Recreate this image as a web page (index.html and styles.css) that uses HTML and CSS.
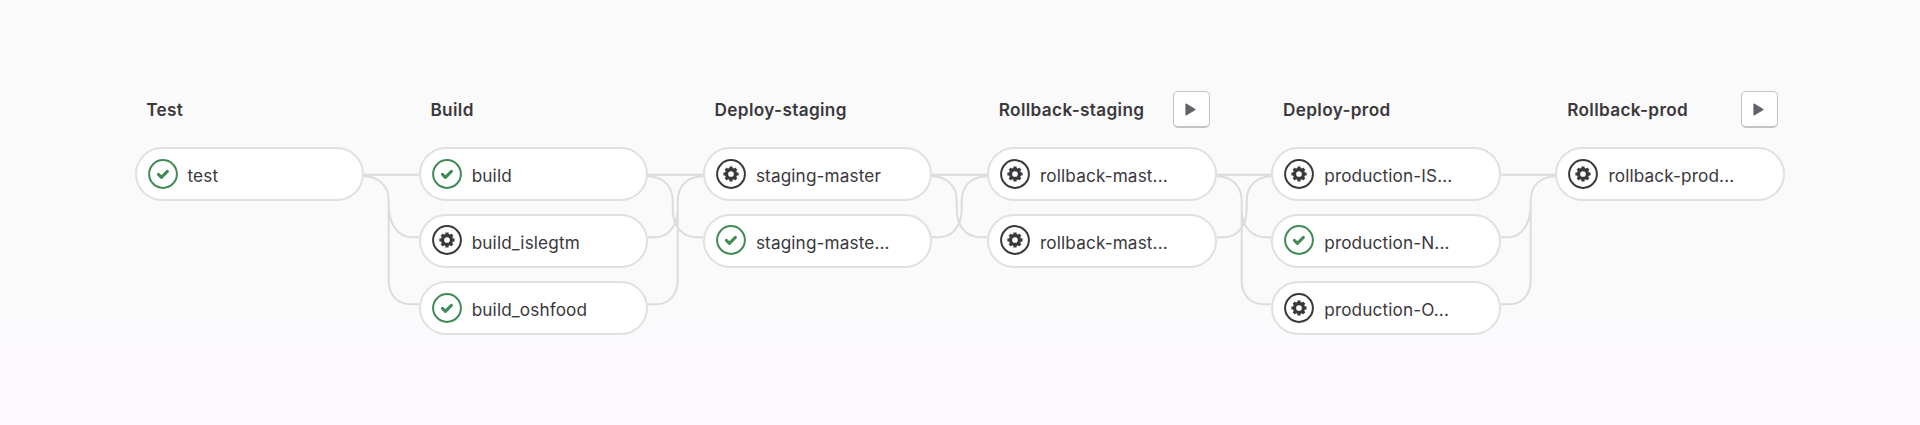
FILE: index.html
```
<!DOCTYPE html>
<html lang="en">
<head>
<meta charset="utf-8">
<title>Pipeline</title>
<link rel="stylesheet" href="styles.css">
</head>
<body>
<svg class="defs" width="0" height="0" aria-hidden="true">
  <symbol id="passed" viewBox="0 0 30 30">
    <circle cx="15" cy="15" r="13.9" fill="none" stroke="#3f8a55" stroke-width="2"/>
    <path d="M10.4 15.4l3 3 6-6" fill="none" stroke="#3f8a55" stroke-width="3" stroke-linecap="round" stroke-linejoin="round"/>
  </symbol>
  <symbol id="manual" viewBox="0 0 30 30">
    <circle cx="15" cy="15" r="13.9" fill="none" stroke="#3a383c" stroke-width="2"/>
    <circle cx="15" cy="15" r="4.5" fill="none" stroke="#3a383c" stroke-width="3.3"/>
    <path d="M15 7.4v3M15 19.6v3M7.4 15h3M19.6 15h3M9.7 9.7l2 2M18.3 18.3l2 2M9.7 20.3l2-2M18.3 11.7l2-2" stroke="#3a383c" stroke-width="3.2"/>
  </symbol>
  <symbol id="play" viewBox="0 0 11 13">
    <path d="M1 1.1v10.8L10 6.5z" fill="#626168" stroke="#626168" stroke-width="1.2" stroke-linejoin="round"/>
  </symbol>
</svg>
<main class="pipeline">
  <section class="stage">
    <header class="stage-head"><h2 class="stage-title">Test</h2></header>
    <div class="job"><svg class="status"><use href="#passed"/></svg><span class="job-name">test</span></div>
  </section>
  <svg class="links" viewBox="0 0 54.7 190">
    <path d="M-1 27.7H56M-1 29.2C14 29.2 24.7 38 24.7 54V133C24.7 149 34 157.2 47 157.2H56M24.7 58C24.7 77 34 90.2 48 90.2H56"/>
  </svg>
  <section class="stage">
    <header class="stage-head"><h2 class="stage-title">Build</h2></header>
    <div class="job"><svg class="status"><use href="#passed"/></svg><span class="job-name">build</span></div>
    <div class="job"><svg class="status raised"><use href="#manual"/></svg><span class="job-name">build_islegtm</span></div>
    <div class="job"><svg class="status"><use href="#passed"/></svg><span class="job-name">build_oshfood</span></div>
  </section>
  <svg class="links" viewBox="0 0 54.7 190">
    <path d="M-1 27.7H56M-1 29.2C14 29.2 24.7 38 24.7 54V62C24.7 79 34 90.2 48 90.2H56M56 29.2C40 29.2 29.7 38 29.7 54V133C29.7 149 20 157.2 8 157.2H-1M29.7 62C29.7 79 20 90.2 8 90.2H-1"/>
  </svg>
  <section class="stage">
    <header class="stage-head"><h2 class="stage-title">Deploy-staging</h2></header>
    <div class="job"><svg class="status"><use href="#manual"/></svg><span class="job-name">staging-master</span></div>
    <div class="job"><svg class="status raised"><use href="#passed"/></svg><span class="job-name">staging-maste...</span></div>
  </section>
  <svg class="links" viewBox="0 0 54.7 190">
    <path d="M-1 27.7H56M-1 29.2C14 29.2 24.7 38 24.7 54V62C24.7 79 34 90.2 48 90.2H56M56 29.2C40 29.2 29.7 38 29.7 54V62C29.7 79 20 90.2 8 90.2H-1"/>
  </svg>
  <section class="stage">
    <header class="stage-head"><h2 class="stage-title">Rollback-staging</h2><button class="play-all" aria-label="Play all manual"><svg class="play"><use href="#play"/></svg></button></header>
    <div class="job"><svg class="status"><use href="#manual"/></svg><span class="job-name">rollback-mast...</span></div>
    <div class="job"><svg class="status raised"><use href="#manual"/></svg><span class="job-name">rollback-mast...</span></div>
  </section>
  <svg class="links" viewBox="0 0 54.7 190">
    <path d="M-1 27.7H56M-1 29.2C14 29.2 24.7 38 24.7 54V133C24.7 149 34 157.2 47 157.2H56M24.7 62C24.7 79 34 90.2 48 90.2H56M56 29.2C40 29.2 29.7 38 29.7 54V62C29.7 79 20 90.2 8 90.2H-1"/>
  </svg>
  <section class="stage">
    <header class="stage-head"><h2 class="stage-title">Deploy-prod</h2></header>
    <div class="job"><svg class="status"><use href="#manual"/></svg><span class="job-name">production-IS...</span></div>
    <div class="job"><svg class="status raised"><use href="#passed"/></svg><span class="job-name">production-N...</span></div>
    <div class="job"><svg class="status"><use href="#manual"/></svg><span class="job-name">production-O...</span></div>
  </section>
  <svg class="links" viewBox="0 0 54.7 190">
    <path d="M-1 27.7H56M56 29.2C40 29.2 29.7 38 29.7 54V133C29.7 149 20 157.2 8 157.2H-1M29.7 58C29.7 77 20 90.2 8 90.2H-1"/>
  </svg>
  <section class="stage">
    <header class="stage-head"><h2 class="stage-title">Rollback-prod</h2><button class="play-all" aria-label="Play all manual"><svg class="play"><use href="#play"/></svg></button></header>
    <div class="job"><svg class="status"><use href="#manual"/></svg><span class="job-name">rollback-prod...</span></div>
  </section>
</main>
</body>
</html>
```
FILE: styles.css
```
body {
  margin: 0;
  font-family: Inter, "Liberation Sans", sans-serif;
  color: #3a383c;
  background: #fafafa;
}

.defs {
  display: block;
}

.pipeline {
  box-sizing: border-box;
  height: 425px;
  padding: 91px 0 0 134.5px;
  display: flex;
  align-items: flex-start;
  background: linear-gradient(#fafafa 0, #fafafa 270px, #fbf9fc 350px, #fbf9fc 100%);
}

.stage {
  flex: none;
  width: 229.5px;
  display: flex;
  flex-direction: column;
  gap: 13px;
}

.stage-head {
  box-sizing: border-box;
  height: 37px;
  margin-bottom: 6px;
  padding: 0 7px 0 11.7px;
  display: flex;
  align-items: center;
  justify-content: space-between;
}

.stage-title {
  margin: 0;
  font-size: 17.2px;
  line-height: 24px;
  font-weight: 600;
  letter-spacing: 0.35px;
  white-space: nowrap;
}

.play-all {
  box-sizing: border-box;
  flex: none;
  width: 37px;
  height: 37px;
  padding: 0 1px 0 0;
  display: flex;
  align-items: center;
  justify-content: center;
  border: 1px solid #c4c3c6;
  border-bottom-width: 2px;
  border-radius: 5px;
  background: #fff;
}

.play {
  width: 11px;
  height: 13px;
}

.job {
  box-sizing: border-box;
  height: 54px;
  padding-left: 11px;
  display: flex;
  align-items: center;
  gap: 10px;
  border: 2px solid #e0e0e1;
  border-radius: 28px;
  background: #fff;
}

.status {
  flex: none;
  width: 30px;
  height: 30px;
}

.status.raised {
  margin-bottom: 2px;
}

.job-name {
  font-size: 17.2px;
  line-height: 24px;
  letter-spacing: 0.12px;
  padding-top: 3px;
  white-space: nowrap;
}

.links {
  flex: none;
  width: 54.7px;
  height: 190px;
  margin-top: 56px;
  fill: none;
  stroke: #dcdcdd;
  stroke-width: 2;
}
```
